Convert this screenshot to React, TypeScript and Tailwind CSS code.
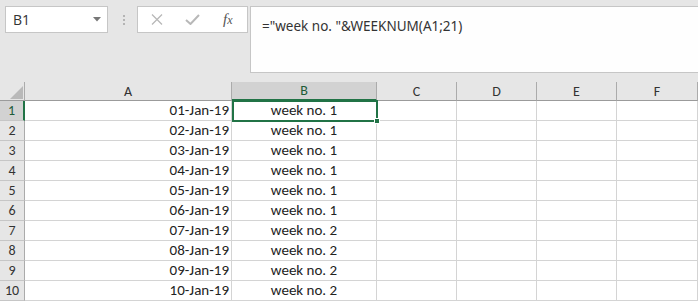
import React from "react";

const rows = [
  ["01-Jan-19", "week no. 1"],
  ["02-Jan-19", "week no. 1"],
  ["03-Jan-19", "week no. 1"],
  ["04-Jan-19", "week no. 1"],
  ["05-Jan-19", "week no. 1"],
  ["06-Jan-19", "week no. 1"],
  ["07-Jan-19", "week no. 2"],
  ["08-Jan-19", "week no. 2"],
  ["09-Jan-19", "week no. 2"],
  ["10-Jan-19", "week no. 2"],
];

const cellFont = { fontFamily: "Carlito, Calibri, 'Liberation Sans', sans-serif" };
const uiFont = { fontFamily: "'Open Sans', 'Noto Sans', sans-serif" };

export default function App() {
  return (
    <div className="w-[698px] h-[302px] overflow-hidden bg-white relative">
      {/* Toolbar */}
      <div className="h-[82px] bg-[#e6e6e6] flex items-start pt-[6px] pl-[5px]">
        <div className="w-[103px] h-[27px] bg-white border border-[#c6c6c6] flex items-center justify-between pl-[7px] pr-[6px]">
          <span className="text-[14px] text-[#333] leading-none" style={uiFont}>B1</span>
          <svg width="8" height="5" viewBox="0 0 8 5"><path d="M0 0H8L4 4.5Z" fill="#777" /></svg>
        </div>
        <div className="w-[29px] h-[27px] flex flex-col items-center justify-center gap-[2px] pl-[2px]">
          <div className="w-[2px] h-[2px] bg-[#b4b4b4]" />
          <div className="w-[2px] h-[2px] bg-[#b4b4b4]" />
          <div className="w-[2px] h-[2px] bg-[#b4b4b4]" />
        </div>
        <div className="w-[111px] h-[27px] bg-white border border-[#c6c6c6] flex items-center pl-[13px]">
          <svg width="12" height="11" viewBox="0 0 12 11">
            <path d="M1 0.5L11 10.5M11 0.5L1 10.5" stroke="#b8b8b8" strokeWidth="1.3" />
          </svg>
          <svg width="15" height="11" viewBox="0 0 15 11" className="ml-[22px]">
            <path d="M1 6L5.5 10L14 1" stroke="#b8b8b8" strokeWidth="2" fill="none" />
          </svg>
          <span className="ml-[23px] text-[#555] italic text-[15px] leading-none" style={{ fontFamily: "'Liberation Serif', serif" }}>
            f<span className="text-[12px]">x</span>
          </span>
        </div>
        <div className="ml-[2px] flex-1 h-[67px] bg-[#fefefe] border border-r-0 border-[#c6c6c6] pl-[11px] pt-[6px]">
          <span className="text-[13.5px] text-[#333]" style={{ fontFamily: "'Noto Sans', 'Open Sans', sans-serif" }}>
            ="week no. "&amp;WEEKNUM(A1;21)
          </span>
        </div>
      </div>

      {/* Grid */}
      <div className="grid grid-cols-[25px_207px_145px_80px_80px_80px_81px] text-[15px] text-[#222]" style={cellFont}>
        {/* Header row */}
        <div className="h-[19px] bg-[#e6e6e6] border-r border-b border-[#ababab] border-b-[#9b9b9b] relative">
          <svg width="13" height="13" viewBox="0 0 13 13" className="absolute left-[10px] top-[4px]">
            <path d="M13 0V13H0Z" fill="#b9b9b9" />
          </svg>
        </div>
        {["A", "B", "C", "D", "E", "F"].map((c) => (
          <div
            key={c}
            className={
              c === "B"
                ? "h-[19px] bg-[#d2d2d2] border-r border-[#ababab] border-b-2 border-b-[#217346] flex items-center justify-center text-[#1e5c38] text-[14px]"
                : "h-[19px] bg-[#e6e6e6] border-r border-b border-[#ababab] border-b-[#9b9b9b] flex items-center justify-center text-[#333] text-[14px]"
            }
          >
            {c}
          </div>
        ))}

        {rows.map((r, i) => (
          <React.Fragment key={i}>
            <div
              className={
                i === 0
                  ? "h-[20px] bg-[#d2d2d2] border-r-2 border-r-[#217346] border-b border-b-[#c6c6c6] flex items-center justify-center text-[#1e5c38] text-[14px]"
                  : "h-[20px] bg-[#e6e6e6] border-r border-r-[#ababab] border-b border-b-[#c6c6c6] flex items-center justify-center text-[#333] text-[14px]"
              }
            >
              {i + 1}
            </div>
            <div className="h-[20px] border-r border-b border-[#d4d4d4] flex items-center justify-end pr-[2px]">{r[0]}</div>
            <div className="h-[20px] border-r border-b border-[#d4d4d4] flex items-center justify-center">{r[1]}</div>
            <div className="h-[20px] border-r border-b border-[#d4d4d4]" />
            <div className="h-[20px] border-r border-b border-[#d4d4d4]" />
            <div className="h-[20px] border-r border-b border-[#d4d4d4]" />
            <div className="h-[20px] border-r border-b border-[#d4d4d4]" />
          </React.Fragment>
        ))}
      </div>

      {/* Selection overlay */}
      <div className="absolute left-[232px] top-[100px] w-[146px] h-[22px] border-2 border-[#217346] pointer-events-none" />
      <div className="absolute left-[374px] top-[118px] w-[6px] h-[6px] bg-[#217346] border border-white pointer-events-none" />
    </div>
  );
}
